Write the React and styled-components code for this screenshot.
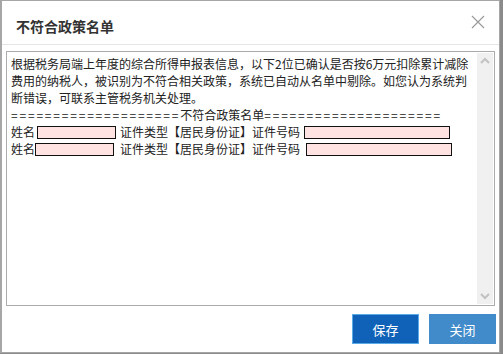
import React from "react";
import styled, { createGlobalStyle } from "styled-components";

const GlobalStyle = createGlobalStyle`
  html, body {
    margin: 0;
    padding: 0;
    background: #8a8a8a;
  }
  body {
    font-family: "Noto Sans CJK SC", "Noto Sans", sans-serif;
  }
`;

const Dialog = styled.div`
  box-sizing: border-box;
  width: 500px;
  height: 353px;
  background: #fff;
  border: 1px solid #a6a6a6;
  border-left-width: 2px;
  display: flex;
  flex-direction: column;
`;

const Header = styled.div`
  height: 43px;
  flex: none;
  display: flex;
  align-items: center;
  justify-content: space-between;
  padding: 0 14px;
  border-bottom: 1px solid #e5e5e5;
`;

const Title = styled.h3`
  margin: 6px 0 0;
  font-size: 14px;
  font-weight: bold;
  color: #333;
`;

const Close = styled.button`
  border: 0;
  background: none;
  padding: 0;
  width: 14px;
  height: 14px;
  margin-top: -2px;
  cursor: pointer;
  display: flex;
`;

const Body = styled.div`
  padding: 6px 4px 0 4px;
  flex: none;
`;

const Memo = styled.div`
  box-sizing: border-box;
  height: 255px;
  border: 1px solid #ababab;
  display: flex;
`;

const Content = styled.div`
  flex: 1;
  padding: 3px 0 0 4px;
  font-size: 12px;
  line-height: 17px;
  color: #222;
`;

const Rule = styled.div`
  white-space: nowrap;
`;

const Dashes = styled.span`
  letter-spacing: 1.8px;
`;

const Field = styled.span`
  display: inline-block;
  box-sizing: border-box;
  width: ${(p) => p.w}px;
  height: 13px;
  margin-left: ${(p) => p.ml || 0}px;
  margin-right: ${(p) => p.mr || 0}px;
  vertical-align: -2px;
  background: #ffe3e3;
  border: 1px solid #111;
`;

const Scrollbar = styled.div`
  width: 16px;
  margin: 1px 1px 1px 0;
  background: #f0f0f0;
  display: flex;
  flex-direction: column;
  justify-content: space-between;
  align-items: center;
  padding: 4px 0;
`;

const Footer = styled.div`
  flex: 1;
  display: flex;
  justify-content: flex-end;
  align-items: flex-start;
  gap: 10px;
  padding: 8px 3px 0 0;
`;

const Button = styled.button`
  box-sizing: border-box;
  width: 67px;
  height: 30px;
  font-family: inherit;
  font-size: 13px;
  color: #fff;
  background: ${(p) => (p.primary ? "#1062b9" : "#428bca")};
  border: 1px solid ${(p) => (p.primary ? "#5aaae8" : "#428bca")};
  cursor: pointer;
`;

const Chevron = ({ up }) => (
  <svg width="10" height="7" viewBox="0 0 10 7">
    <path
      d={up ? "M1 6 L5 2 L9 6" : "M1 1 L5 5 L9 1"}
      fill="none"
      stroke="#c2c2c2"
      strokeWidth="2"
    />
  </svg>
);

const eq = "====================";

export default function App() {
  return (
    <>
      <GlobalStyle />
      <Dialog>
        <Header>
          <Title>不符合政策名单</Title>
          <Close aria-label="关闭">
            <svg width="14" height="14" viewBox="0 0 14 14">
              <path d="M1 1 L13 13 M13 1 L1 13" stroke="#9a9a9a" strokeWidth="1.2" />
            </svg>
          </Close>
        </Header>
        <Body>
          <Memo>
            <Content>
              根据税务局端上年度的综合所得申报表信息，以下2位已确认是否按6万元扣除累计减除费用的纳税人，被识别为不符合相关政策，系统已自动从名单中剔除。如您认为系统判断错误，可联系主管税务机关处理。
              <Rule>
                <Dashes>{eq}</Dashes>不符合政策名单<Dashes>{eq + "="}</Dashes>
              </Rule>
              <div>
                姓名<Field w={79} ml={2} mr={4} />证件类型【居民身份证】证件号码<Field w={146} ml={4} />
              </div>
              <div>
                姓名<Field w={79} mr={6} />证件类型【居民身份证】证件号码<Field w={146} ml={6} />
              </div>
            </Content>
            <Scrollbar>
              <Chevron up />
              <Chevron />
            </Scrollbar>
          </Memo>
        </Body>
        <Footer>
          <Button primary>保存</Button>
          <Button>关闭</Button>
        </Footer>
      </Dialog>
    </>
  );
}
